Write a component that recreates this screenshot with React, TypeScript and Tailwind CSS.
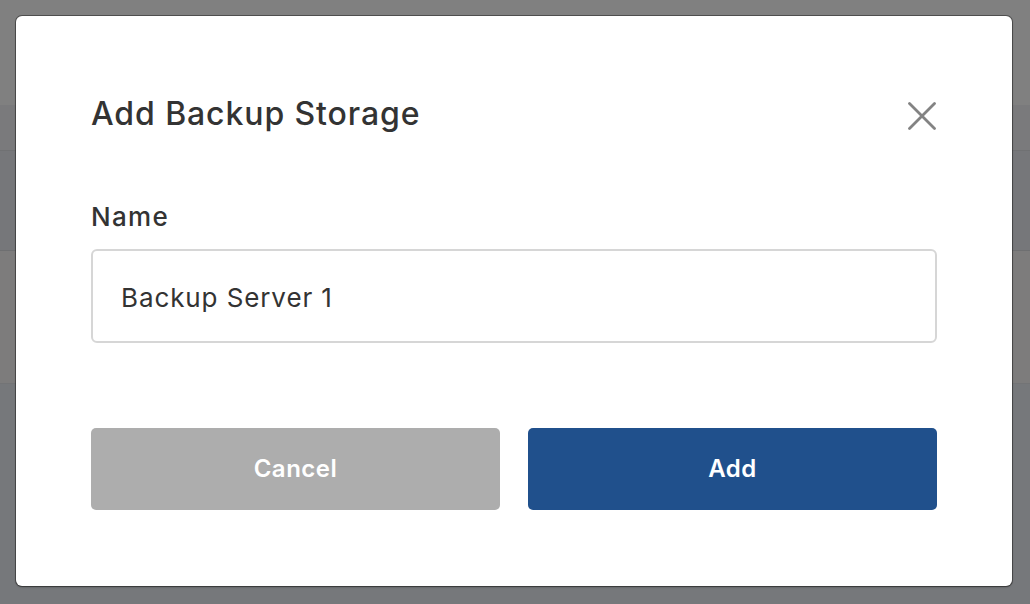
import React from "react";

export default function App() {
  return (
    <div className="relative w-[1030px] h-[604px] overflow-hidden font-['Inter',sans-serif]">
      <div className="flex flex-col h-full">
        <div className="h-[105px] bg-[#808080]" />
        <div className="h-[45px] bg-[#7a7a7c]" />
        <div className="h-px bg-[#707173]" />
        <div className="h-[99px] bg-[#76777a]" />
        <div className="h-px bg-[#6e6f71]" />
        <div className="h-[132px] bg-[#7d7c7c]" />
        <div className="h-px bg-[#737476]" />
        <div className="flex-1 bg-[#76787b]" />
      </div>
      <div className="absolute left-[16px] top-[16px] w-[996px] h-[570px] bg-white rounded-[6px] shadow-[0_0_0_1px_rgba(40,40,40,0.55),0_1px_2px_rgba(0,0,0,0.4)] px-[75px] pt-[75px] flex flex-col">
        <div className="flex items-center justify-between h-[46px]">
          <h1 className="text-[32px] leading-[46px] font-medium text-[#333333] tracking-[0.9px]">Add Backup Storage</h1>
          <svg width="28" height="28" viewBox="0 0 28 28" className="mr-[1px] mt-[4px]">
            <path d="M1.5 1.5 L26.5 26.5 M26.5 1.5 L1.5 26.5" stroke="#838383" strokeWidth="2.8" strokeLinecap="round" />
          </svg>
        </div>
        <label className="mt-[65px] text-[26px] leading-[30px] font-medium text-[#333333] tracking-[1.3px]">Name</label>
        <div className="mt-[17px] h-[94px] border-2 border-[#d6d6d6] rounded-[6px] flex items-center pl-[28px] pt-[3px] text-[26px] text-[#333333] tracking-[0.9px]">
          Backup Server 1
        </div>
        <div className="mt-[85px] grid grid-cols-2 gap-[28px]">
          <button className="h-[82px] rounded-[5px] bg-[#adadad] text-white text-[24px] font-semibold tracking-[0.5px]">Cancel</button>
          <button className="h-[82px] rounded-[5px] bg-[#20508c] text-white text-[24px] font-semibold tracking-[0.5px]">Add</button>
        </div>
      </div>
    </div>
  );
}
